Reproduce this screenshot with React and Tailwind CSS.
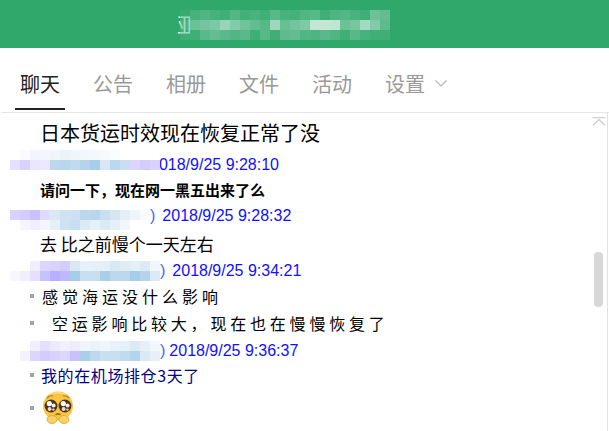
import React from 'react';

const cjk = "font-['Noto_Sans_CJK_SC','Noto_Sans',sans-serif]";

const tabs = ['聊天', '公告', '相册', '文件', '活动', '设置'];

// pixelated (censored) blocks, one string of hex colours per row
const headerCells = [
  '3fae7780 46b27d 4fb683 45b17c 3fae77 51b785 43b07a 48b37e 3fae77 55b988 47b27d 44b17b 50b684 55b988 3fae77 4cb581 52b786 49b37f 3fae77 6cc197 62bd90',
  '60bc8f90 6cc197 74c49d 7dc8a4 98d4b6 84cbaa 70c39a 62bd90 54b887 a0d7bc 68bf94 74c49d 80c9a7 c4e7d5 c4e7d5 c0e5d2 6cc197 78c6a0 a6dac0 82caa8 5fbb8e',
  '4bb48080 3fae77 58ba8b 62bd90 5ab98c 50b684 58ba8b 3fae77 55b988 3fae77 5fbb8e 62bd90 50b684 4db582 5ab98c 4fb683 3fae77 55b988 46b27d 3fae77 3fae77',
];

const nameCells1 = [
  'ffffff fbfbff f4f4ff f3f6ff eef5fb eaf3fa eef5fb f2f7fb f4f8fc f7fafd fafcfe ffffff ffffff ffffff ffffff',
  'e6e0ff d9d2ff eae6ff ece8ff bcd8ee b8d6ed c0daef b4d4ec a6cde9 d8e9f5 bcd8ee c8dff1 dcd6ff d4ccff d9d2ff',
];
const nameCells2 = [
  'd9d2ff d4ccff c8c0ff e0dbff dce8f5 cfe2f2 cde1f2 bcd8ee b8d6ed c8dff1 d6e7f4 e4eff8 eef5fb f8fbfd',
  'ffffff f6f4ff f0eeff f6f4ff e6f0f9 cfe2f2 c8dff1 dceaf6 e6f0f9 dceaf6 e6f0f9 f2f7fb ffffff ffffff',
];
const nameCells3 = [
  'ffffff ffffff f1eeff dcd6ff d9d2ff d4ccff d8e9f5 e6f0f9 e4eff8 e4eff8 d8e9f5 e0edf7 e4eff8 dceaf6 eef5fb',
  'f8f6ff f1eeff e6e0ff c8c0ff b8b0ff c0b8ff a6cde9 c8dff1 c8dff1 a9cfe9 bcd8ee bcd8ee a6cde9 b4d4ec dceaf6',
];
const nameCells4 = [
  'ffffff f0eeff e6e0ff ebe8ff f2f0ff eeebff f0f5fb eaf3fa eef5fb e8f1f9 e6f0f9 dceaf6 e6f0f9 f2f7fb',
  'f4f2ff dcd6ff d4ccff d9d2ff dcd6ff c8c0ff a9cfe9 bcd8ee c8dff1 c8dff1 c0daef b4d4ec d8e9f5 e6f0f9',
];

const Mosaic = ({ rows, className = '' }) => {
  const parsed = rows.map((r) => r.split(' '));
  return (
    <svg width={parsed[0].length * 10} height={parsed.length * 10} className={`shrink-0 block ${className}`}>
      {parsed.map((row, y) =>
        row.map((c, x) => <rect key={x + '-' + y} x={x * 10} y={y * 10} width="10" height="10" fill={'#' + c} />)
      )}
    </svg>
  );
};

const MetaRow = ({ rows, pad, date, height, close, shift = '', dateGap = '' }) => (
  <div className={`flex items-center text-[16px] text-[#1010ff] font-['Liberation_Sans',sans-serif] ${pad} ${height}`}>
    <Mosaic rows={rows} className={`relative z-10 ${shift}`} />
    {close && <span className="text-[#3b6cf0]">)</span>}
    <span className={dateGap}>{date}</span>
  </div>
);

const Bullet = () => <span className="w-[4px] h-[4px] bg-[#9aa5a8] shrink-0" />;

const Emoji = () => (
  <svg width="32" height="33" viewBox="0 0 32 33" className="block">
    <ellipse cx="16" cy="15" rx="15" ry="14.5" fill="#f6c644" />
    <path d="M6 4 Q16 -2 26 4 Q16 1 6 4Z" fill="#fbe08a" />
    <path d="M5 7 Q8 4 11 5 M21 5 Q24 4 27 7" stroke="#b47a1e" strokeWidth="1.2" fill="none" />
    <circle cx="9" cy="15" r="6.4" fill="#4f2f17" />
    <circle cx="23" cy="15" r="6.4" fill="#4f2f17" />
    <circle cx="7.3" cy="12.6" r="2.6" fill="#fff" />
    <circle cx="11.6" cy="14.4" r="2" fill="#f5efe6" />
    <circle cx="7.6" cy="18" r="2" fill="#e8dccb" />
    <circle cx="11.4" cy="18.6" r="1.2" fill="#e8dccb" />
    <circle cx="21.3" cy="12.6" r="2.6" fill="#fff" />
    <circle cx="25.6" cy="14.4" r="2" fill="#f5efe6" />
    <circle cx="21.6" cy="18" r="2" fill="#e8dccb" />
    <circle cx="25.4" cy="18.6" r="1.2" fill="#e8dccb" />
    <path d="M13.5 24 Q16 21.5 18.5 24" stroke="#a8611a" strokeWidth="1.3" fill="#d9822b" />
    <ellipse cx="10" cy="28.5" rx="5" ry="4" fill="#f9d267" stroke="#e0a02f" strokeWidth="0.8" />
    <ellipse cx="22" cy="28.5" rx="5" ry="4" fill="#f9d267" stroke="#e0a02f" strokeWidth="0.8" />
  </svg>
);

export default function App() {
  return (
    <div className={`w-[609px] h-[431px] overflow-hidden bg-white flex flex-col ${cjk}`}>
      <header className="h-[48px] bg-[#30a86b] shrink-0 pl-[177px] pt-[10px] flex items-start">
        <span className="w-[3px] text-[20px] leading-[30px] text-white whitespace-nowrap">亚</span>
        <Mosaic rows={headerCells} className="relative" />
      </header>

      <nav className="h-[65px] shrink-0 ml-[2px] pl-[13px] flex gap-[23px] border-b border-[#e5e5e5]">
        {tabs.map((t, i) => (
          <div
            key={t}
            className={`h-[62px] px-[5px] flex items-center gap-[10px] text-[20px] pt-[12px] border-b-2 ${
              i === 0 ? 'text-[#222222] border-[#222222]' : 'text-[#999999] border-transparent'
            }`}
          >
            {t}
            {t === '设置' && (
              <svg width="12" height="7" viewBox="0 0 12 7" className="mt-[-2px]">
                <path d="M0.5 0.5 L6 6 L11.5 0.5" stroke="#b5b5b5" strokeWidth="1.2" fill="none" />
              </svg>
            )}
          </div>
        ))}
      </nav>

      <main className="relative flex-1 pt-[6px] border-r border-[#e2e2e2] mr-[1px]">
        <div className="h-[28px] pl-[40px] flex items-center text-[20px] text-black">日本货运时效现在恢复正常了没</div>
        <MetaRow rows={nameCells1} pad="pl-[10px]" height="h-[35px]" date="2018/9/25 9:28:10" shift="mt-[-10px]" dateGap="ml-[-10px]" />
        <div className="h-[16px] pl-[40px] flex items-center text-[15px] font-bold text-black">请问一下，现在网一黑五出来了么</div>
        <MetaRow rows={nameCells2} pad="pl-[10px]" height="h-[35px]" date="2018/9/25 9:28:32" close shift="mt-[8px]" dateGap="ml-[7px]" />
        <div className="h-[20px] pl-[40px] flex items-center text-[17px] leading-none text-black">去 比之前慢个一天左右</div>
        <MetaRow rows={nameCells3} pad="pl-[10px]" height="h-[35px]" date="2018/9/25 9:34:21" close dateGap="ml-[7px]" />
        <div className="h-[16px] pl-[30px] flex items-center gap-[8px] text-[16px] tracking-[4px] text-black">
          <Bullet />
          <span>感觉海运没什么影响</span>
        </div>
        <div className="h-[38px] pl-[30px] flex items-center gap-[18px] text-[16px] tracking-[3.8px] text-black">
          <Bullet />
          <span>空运影响比较大，现在也在慢慢恢复了</span>
        </div>
        <MetaRow rows={nameCells4} pad="pl-[20px]" height="h-[18px]" date="2018/9/25 9:36:37" close dateGap="ml-[4px]" />
        <div className="h-[30px] pl-[30px] flex items-center gap-[7px] text-[16px] tracking-[0.6px] text-[#000080]">
          <Bullet />
          <span>我的在机场排仓3天了</span>
        </div>
        <div className="h-[35px] pl-[30px] flex items-center gap-[8px]">
          <Bullet />
          <Emoji />
        </div>

        {/* scrollbar */}
        <svg width="14" height="10" viewBox="0 0 14 10" className="absolute top-[4px] right-[1px]">
          <path d="M0.5 0.5 H13.5 M1 8.5 L7 2.5 L13 8.5" stroke="#cfcfcf" strokeWidth="1.4" fill="none" />
        </svg>
        <div className="absolute top-[139px] left-[594px] w-[9px] h-[55px] rounded-[4px] bg-[#d8d8d8]" />
      </main>
    </div>
  );
}
